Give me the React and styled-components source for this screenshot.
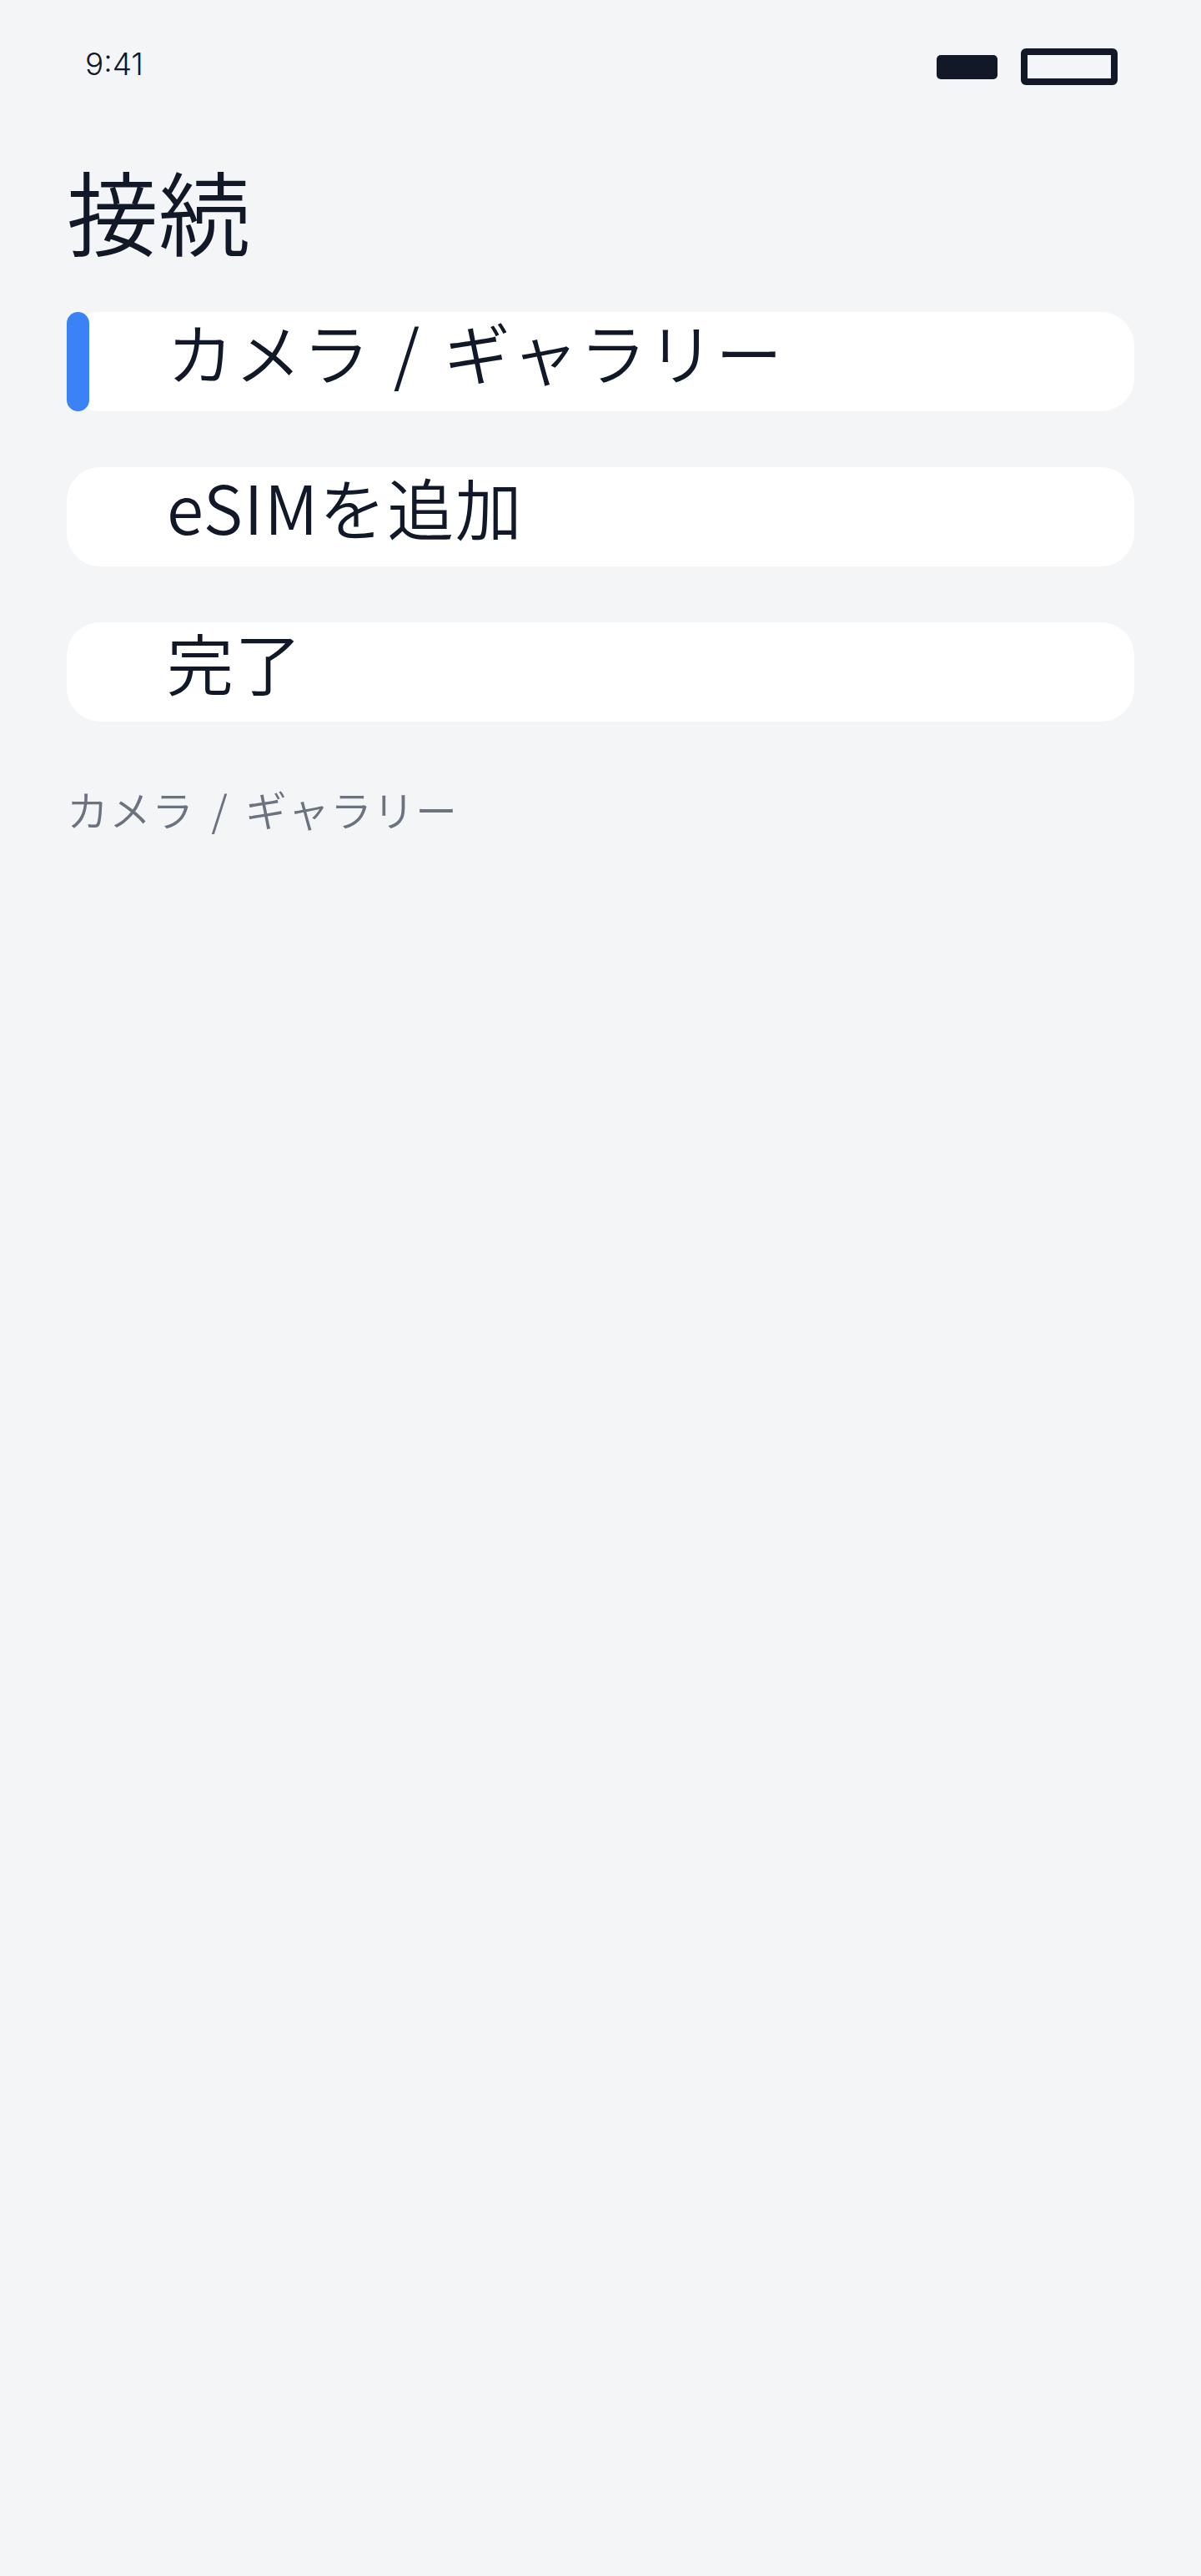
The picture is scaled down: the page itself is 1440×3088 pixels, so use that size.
import styled, { createGlobalStyle } from "styled-components";

const GlobalStyle = createGlobalStyle`
    html, body {
        margin: 0;
        padding: 0;
        background: #f4f5f7;
    }
    body {
        font-family: "Noto Sans CJK JP", "Noto Sans", sans-serif;
        font-weight: 350;
        color: #111827;
    }
`

const Screen = styled.div`
    min-height: 3088px;
    box-sizing: border-box;
    padding: 0 80px;
    background: #f4f5f7;
`

const StatusBar = styled.div`
    display: flex;
    align-items: center;
    justify-content: space-between;
    height: 44px;
    padding: 58px 20px 0 22px;
`

const Time = styled.span`
    font-family: Inter, "Noto Sans", sans-serif;
    font-size: 37px;
    font-weight: 300;
    line-height: 44px;
    margin-top: -6px;
    color: #111827;
`

const Indicators = styled.div`
    display: flex;
    align-items: center;
    gap: 28px;
`

const Signal = styled.div`
    width: 73px;
    height: 29px;
    border-radius: 5px;
    background: #111827;
`

const Battery = styled.div`
    width: 116px;
    height: 44px;
    box-sizing: border-box;
    border: 8px solid #111827;
    border-radius: 6px;
`

const Title = styled.h1`
    margin: 0;
    padding-top: 84px;
    font-size: 110px;
    font-weight: 350;
    line-height: 130px;
`

const List = styled.div`
    display: flex;
    flex-direction: column;
    gap: 67px;
    margin-top: 58px;
`

const Row = styled.div`
    position: relative;
    height: 119px;
    border-radius: 40px;
    background: #ffffff;
    padding-left: 120px;
    font-size: 80px;
    letter-spacing: 1.5px;
    word-spacing: 8px;
    line-height: 92px;
    &::before {
        content: "";
        display: ${({ $active }) => ($active ? "block" : "none")};
        position: absolute;
        left: 0;
        top: 0;
        bottom: 0;
        width: 27px;
        border-radius: 14px;
        background: #3b82f6;
    }
`

const Caption = styled.p`
    margin: 74px 0 0;
    font-size: 50px;
    letter-spacing: 1px;
    word-spacing: 8px;
    line-height: 60px;
    color: #6b7280;
`

const items = [
    { id: "camera", label: "カメラ / ギャラリー" },
    { id: "esim", label: "eSIMを追加" },
    { id: "done", label: "完了" },
]

const App = () => {
    const current = "camera"
    return (
        <>
        <GlobalStyle/>
        <Screen>
            <StatusBar>
                <Time>9:41</Time>
                <Indicators>
                    <Signal/>
                    <Battery/>
                </Indicators>
            </StatusBar>
            <Title>接続</Title>
            <List>
                {items.map((item) =>
                    <Row key={item.id} $active={item.id === current}>
                        {item.label}
                    </Row>
                )}
            </List>
            <Caption>カメラ / ギャラリー</Caption>
        </Screen>
        </>
    )
}

export default App;
